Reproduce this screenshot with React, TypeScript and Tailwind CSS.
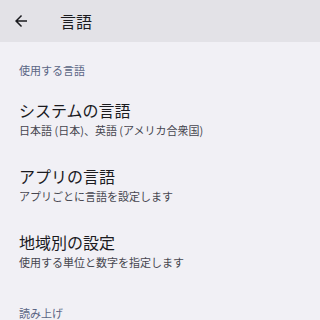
import React from "react";

const font = { fontFamily: '"Noto Sans CJK JP", "Noto Sans", sans-serif' };

function Item({ title, sub }: { title: string; sub: string }) {
  return (
    <div className="pl-[19px] pr-4 py-[13px]">
      <div className="text-[16px] leading-[24px] text-[#1b1b1f]">{title}</div>
      <div className="text-[11px] leading-[16px] text-[#46464f] whitespace-nowrap">{sub}</div>
    </div>
  );
}

export default function App() {
  return (
    <div className="w-[320px] h-[320px] overflow-hidden bg-[#f1f0f5]" style={font}>
      <div className="h-[42px] bg-[#e3e2e7] flex items-center">
        <svg width="18" height="18" viewBox="0 0 24 24" className="ml-[12px]">
          <path d="M20 11H7.83l5.59-5.59L12 4l-8 8 8 8 1.41-1.41L7.83 13H20v-2z" fill="#1b1b1f" />
        </svg>
        <div className="ml-[30px] text-[16px] text-[#1b1b1f]">言語</div>
      </div>
      <div className="pl-[19px] pt-[20px] pb-[7px] text-[11px] leading-[16px] text-[#5a6584]">使用する言語</div>
      <Item title="システムの言語" sub="日本語 (日本)、英語 (アメリカ合衆国)" />
      <Item title="アプリの言語" sub="アプリごとに言語を設定します" />
      <Item title="地域別の設定" sub="使用する単位と数字を指定します" />
      <div className="pl-[19px] pt-[22px] text-[11px] leading-[16px] text-[#5a6584]">読み上げ</div>
    </div>
  );
}
